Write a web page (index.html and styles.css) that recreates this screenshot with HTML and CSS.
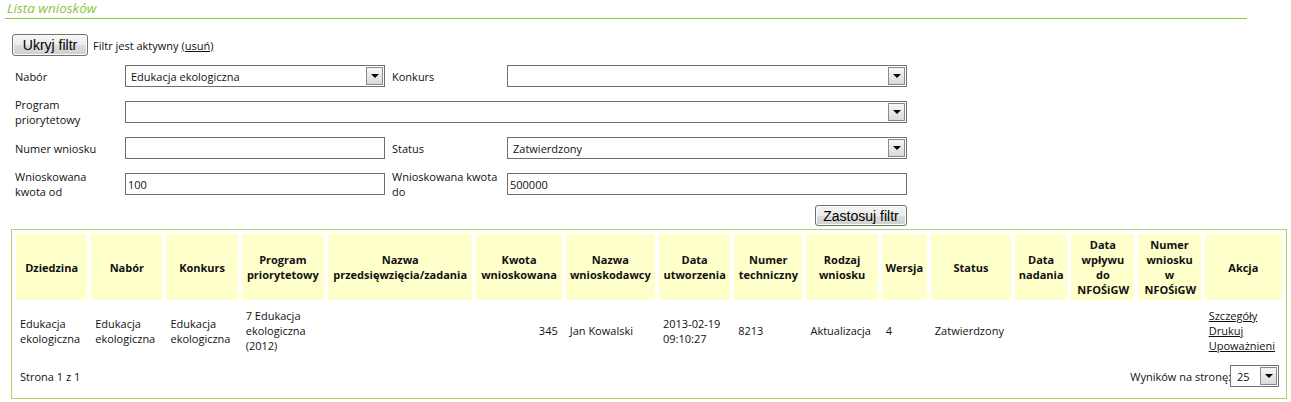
FILE: index.html
```html
<!DOCTYPE html>
<html lang="pl">
<head>
<meta charset="utf-8">
<title>Lista wniosków</title>
<link rel="stylesheet" href="styles.css">
</head>
<body>
<div class="page">
  <div class="title">Lista wniosków</div>

  <div class="toolbar">
    <button class="btn">Ukryj filtr</button>
    <span class="filter-info">Filtr jest aktywny <a href="#">(usuń)</a></span>
  </div>

  <div class="filters">
    <div class="lbl">Nabór</div>
    <div class="combo"><span class="combo-val">Edukacja ekologiczna</span><span class="combo-arrow"></span></div>
    <div class="lbl lbl2">Konkurs</div>
    <div class="combo"><span class="combo-val"></span><span class="combo-arrow"></span></div>

    <div class="lbl">Program priorytetowy</div>
    <div class="combo span3"><span class="combo-val"></span><span class="combo-arrow"></span></div>

    <div class="lbl">Numer wniosku</div>
    <div class="input"></div>
    <div class="lbl lbl2">Status</div>
    <div class="combo"><span class="combo-val">Zatwierdzony</span><span class="combo-arrow"></span></div>

    <div class="lbl">Wnioskowana kwota od</div>
    <div class="input">100</div>
    <div class="lbl lbl2">Wnioskowana kwota do</div>
    <div class="input">500000</div>
  </div>

  <div class="apply-row">
    <button class="btn">Zastosuj filtr</button>
  </div>

  <div class="results">
    <table class="grid">
      <colgroup>
        <col class="c71"><col class="c71"><col class="c71"><col class="c82">
        <col class="c144"><col class="c85"><col class="c89"><col class="c71">
        <col class="c68"><col class="c71"><col class="c45"><col class="c80">
        <col class="c52"><col class="c63"><col class="c62"><col class="c77">
      </colgroup>
      <thead>
        <tr>
          <th>Dziedzina</th>
          <th>Nabór</th>
          <th>Konkurs</th>
          <th>Program priorytetowy</th>
          <th>Nazwa przedsięwzięcia/zadania</th>
          <th>Kwota wnioskowana</th>
          <th>Nazwa wnioskodawcy</th>
          <th>Data utworzenia</th>
          <th>Numer techniczny</th>
          <th>Rodzaj wniosku</th>
          <th>Wersja</th>
          <th>Status</th>
          <th>Data nadania</th>
          <th class="narrow">Data wpływu do NFOŚiGW</th>
          <th class="narrow">Numer wniosku w NFOŚiGW</th>
          <th>Akcja</th>
        </tr>
      </thead>
      <tbody>
        <tr>
          <td>Edukacja ekologiczna</td>
          <td>Edukacja ekologiczna</td>
          <td>Edukacja ekologiczna</td>
          <td>7 Edukacja ekologiczna (2012)</td>
          <td></td>
          <td class="num">345</td>
          <td>Jan Kowalski</td>
          <td>2013-02-19 09:10:27</td>
          <td>8213</td>
          <td>Aktualizacja</td>
          <td>4</td>
          <td>Zatwierdzony</td>
          <td></td>
          <td></td>
          <td></td>
          <td class="actions"><a href="#">Szczegóły</a><a href="#">Drukuj</a><a href="#">Upoważnieni</a></td>
        </tr>
      </tbody>
    </table>
    <div class="pager">
      <span class="pages">Strona 1 z 1</span>
      <span class="per-page">Wyników na stronę:<span class="combo small"><span class="combo-val">25</span><span class="combo-arrow"></span></span></span>
    </div>
  </div>
</div>
</body>
</html>
```

FILE: styles.css
```css
html, body {
  margin: 0;
  padding: 0;
  background: #fff;
}
body {
  font-family: "Open Sans", "Segoe UI", sans-serif;
  font-size: 11px;
  line-height: 15px;
  color: #111;
}
a {
  color: #111;
  text-decoration: underline;
}
.page {
  width: 1291px;
}
.title {
  margin-left: 5px;
  width: 1240px;
  height: 18px;
  padding-left: 2px;
  border-bottom: 1px solid #8cc63e;
  color: #8cc63e;
  font-style: italic;
  font-size: 13.5px;
  line-height: 17px;
}
.toolbar {
  display: flex;
  align-items: center;
  margin: 15px 0 0 12px;
  height: 22px;
}
.btn {
  font-family: "Liberation Sans", Arial, sans-serif;
  font-size: 14px;
  line-height: 16px;
  color: #000;
  padding: 2px 9px 2px 9px;
  height: 22px;
  border: 1px solid #707070;
  border-radius: 3px;
  background: linear-gradient(#f6f6f6 0%, #ebebeb 50%, #dddddd 51%, #cfcfcf 100%);
  box-shadow: inset 0 0 0 1px #fbfbfb;
}
.toolbar .btn {
  width: 76px;
}
.filter-info {
  margin-left: 5px;
}
.filters {
  display: grid;
  grid-template-columns: 110px 260px 122px 400px;
  grid-auto-rows: 22px;
  row-gap: 14px;
  margin: 9px 0 0 15px;
  align-items: center;
}
.lbl {
  padding-right: 12px;
}
.lbl2 {
  padding-left: 7px;
  padding-right: 6px;
}
.combo, .input {
  box-sizing: border-box;
  height: 22px;
  border: 1px solid #707070;
  background: #fff;
  display: flex;
  align-items: center;
}
.input {
  padding-left: 2px;
}
.combo-val {
  flex: 1;
  padding-left: 5px;
}
.combo-arrow {
  box-sizing: border-box;
  width: 17px;
  height: 18px;
  margin-right: 1px;
  border: 1px solid #8a8a8a;
  background: linear-gradient(#f7f7f7, #dadada);
  display: flex;
  align-items: center;
  justify-content: center;
}
.combo-arrow::after {
  content: "";
  border-left: 4px solid transparent;
  border-right: 4px solid transparent;
  border-top: 4px solid #000;
}
.span3 {
  grid-column: 2 / 5;
}
.apply-row {
  display: flex;
  justify-content: flex-end;
  width: 907px;
  margin-top: 10px;
}
.apply-row .btn {
  width: 92px;
  height: 21px;
  padding: 1px 4px;
}
.results {
  margin: 3px 0 0 11px;
  width: 1274px;
  border: 1px solid #b3d465;
}
.grid {
  width: 1274px;
  table-layout: fixed;
  border-collapse: separate;
  border-spacing: 4px;
}
.c71 { width: 71px; }
.c82 { width: 82px; }
.c144 { width: 144px; }
.c85 { width: 85px; }
.c89 { width: 89px; }
.c68 { width: 68px; }
.c45 { width: 45px; }
.c80 { width: 80px; }
.c52 { width: 52px; }
.c63 { width: 63px; }
.c62 { width: 62px; }
.c77 { width: 77px; }
.grid th {
  background: #ffffcc;
  font-weight: 700;
  text-align: center;
  vertical-align: middle;
  height: 60px;
  padding: 3px 2px;
  color: #111;
}
.grid th.narrow {
  padding-left: 6px;
  padding-right: 6px;
}
.grid td {
  padding: 4px 4px 5px;
  vertical-align: middle;
  text-align: left;
  height: 45px;
}
.grid td.num {
  text-align: right;
}
.actions a {
  display: block;
}
.pager {
  display: flex;
  justify-content: space-between;
  align-items: center;
  padding: 3px 7px 11px 8px;
  height: 22px;
}
.per-page {
  display: flex;
  align-items: center;
}
.combo.small {
  width: 49px;
  margin-left: -1px;
}
.combo.small .combo-val {
  padding-left: 6px;
}
```
